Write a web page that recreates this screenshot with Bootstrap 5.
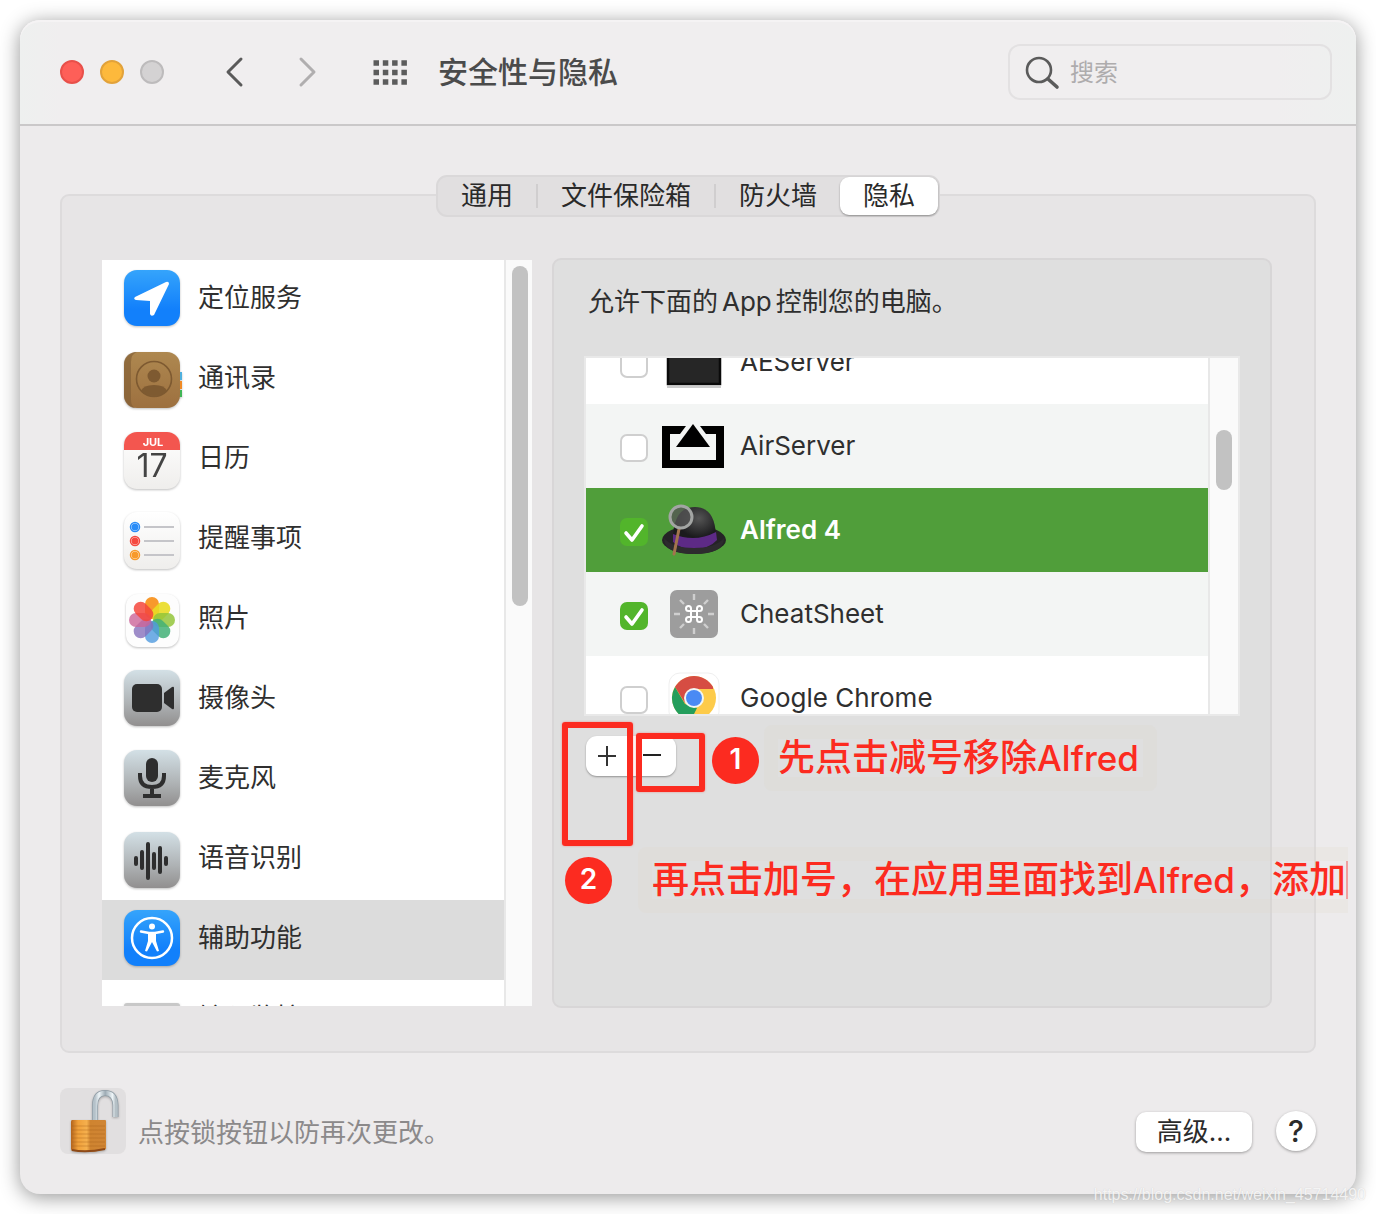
<!DOCTYPE html>
<html lang="zh-CN">
<head>
<meta charset="utf-8">
<meta name="viewport" content="width=device-width, initial-scale=1">
<title>安全性与隐私</title>
<link href="https://cdn.jsdelivr.net/npm/bootstrap@5.3.0/dist/css/bootstrap.min.css" rel="stylesheet">
<script src="https://cdn.jsdelivr.net/npm/bootstrap@5.3.0/dist/js/bootstrap.bundle.min.js" defer></script>
<style>
  body { background: #fff; color: #2f2f2f; font-family: Inter, "Noto Sans CJK SC", sans-serif; font-size: 26px; line-height: 40px; overflow-x: hidden; }
  svg { display: block; flex: none; overflow: visible; }
  .page { padding: 20px; }
  .win { background: #edebec; border-radius: 20px; box-shadow: 0 3px 20px rgba(0,0,0,.42); }
  .titlebar { height: 106px; padding: 0 24px 0 40px; background: linear-gradient(90deg, #eef0ef 0, #f0eeef 40px, #f0eeef calc(100% - 80px), #eef0ef 100%); border-bottom: 2px solid #cac8c9; border-radius: 20px 20px 0 0; box-shadow: inset 0 2px #f5f3f4; }
  .light { width: 24px; height: 24px; border-radius: 50%; border: 2px solid; padding: 0; }
  .light-close { background: #fe5f58; border-color: #e8504a; }
  .light-min { background: #fdb93c; border-color: #e2a23a; }
  .light-off { background: #d4d2d3; border-color: #bdbbbc; }
  .bare { background: none; border: 0; padding: 0; }
  .heading { font-size: 30px; font-weight: 500; color: #4b4b4b; margin-left: 30px; }
  .search { width: 324px; height: 56px; border: 2px solid #e3e1e2; border-radius: 12px; padding: 2px 16px 0; gap: 10px; }
  .search input { font-size: 24px; line-height: 40px; min-width: 0; outline: 0; color: #333; }
  .search input::placeholder { color: #aeacad; opacity: 1; }
  .content { padding: 49px 40px 40px; }
  .tabs { position: relative; z-index: 1; height: 42px; border: 2px solid #dad8d9; border-radius: 11px; background: #e1dfe0; }
  .tabs button { padding: 0 23px; height: 38px; line-height: 36px; color: #2a2a2a; }
  .tabs i { width: 2px; height: 24px; background: #d0cecf; }
  .tabs .on { background: #fff; border-radius: 9px; box-shadow: 0 1px 2px rgba(0,0,0,.35); }
  .panel { margin-top: -23px; padding: 62px 42px 43px 40px; gap: 20px; background: #e7e5e6; border: 2px solid #dddbdc; border-radius: 9px; }
  .side { width: 430px; height: 746px; margin: 2px 0; background: #fff; overflow: hidden; flex: none; }
  .side a { height: 80px; padding: 0 0 4px 22px; gap: 18px; color: #2f2f2f; text-decoration: none; }
  .side a.on { background: #dcdcdc; }
  .side svg, .lockbtn svg { filter: drop-shadow(0 1px 1px rgba(0,0,0,.25)); }
  .track { width: 30px; flex: none; background: #fafafa; border-left: 2px solid #e8e8e8; padding: 6px; }
  .side .track { width: 28px; }
  .thumb { width: 16px; border-radius: 8px; background: #c2c2c2; }
  .thumb-side { height: 340px; }
  .track-apps { padding-top: 72px; }
  .thumb-apps { height: 60px; }
  .group-box { position: relative; background: #dfdfdf; border: 2px solid #d8d6d7; border-radius: 9px; padding: 22px 30px; min-width: 0; }
  .group-box p { margin: 0 0 34px 4px; white-space: nowrap; }
  .apps { height: 360px; border: 2px solid #e9e9e9; background: #fff; overflow: hidden; }
  .apps ul { margin: -38px 0 0; }
  .apps label { height: 84px; padding-left: 34px; gap: 14px; }
  .apps li:nth-child(even) { background: #f3f5f4; }
  .apps li.on { background: #509e3a; color: #fff; font-weight: 600; }
  .apps .form-check-input { width: 28px; height: 28px; margin: 4px 0 0; border: 2px solid #cfcfcf; border-radius: 7px; background-color: #fff; flex: none; }
  .apps .form-check-input:checked { border: 0; background: #52b52b url("data:image/svg+xml,%3Csvg xmlns='http://www.w3.org/2000/svg' viewBox='0 0 28 28'%3E%3Cpath d='M6 15l6 7L22 8' fill='none' stroke='%23fff' stroke-width='3.6' stroke-linecap='round' stroke-linejoin='round'/%3E%3C/svg%3E") center/28px no-repeat; }
  .icon-slot { width: 64px; flex: none; }
  .pm { margin: 20px 0 0 2px; width: 90px; height: 40px; background: #fff; border-radius: 11px; box-shadow: 0 1px 2px rgba(0,0,0,.35); }
  .pm button { padding: 0 14px 0 12px; }
  .note-frame { position: absolute; border: 6px solid #fc2b20; border-radius: 3px; box-shadow: 0 0 2px rgba(252,43,32,.5); pointer-events: none; }
  .frame-plus { left: 8px; top: 462px; width: 71px; height: 124px; }
  .frame-minus { left: 82px; top: 473px; width: 69px; height: 59px; }
  .dot { position: absolute; width: 47px; height: 47px; border-radius: 50%; background: #fc2b20; color: #fff; font-size: 28px; font-weight: 600; line-height: 44px; text-align: center; }
  .dot-1 { left: 158px; top: 477px; }
  .dot-2 { left: 11px; top: 597px; }
  .note { position: absolute; border: 14px solid rgba(222,214,200,.2); border-radius: 8px; color: #fc2b20; font-size: 37px; line-height: 38px; font-weight: 500; white-space: nowrap; }
  .note span { font-size: 35px; }
  .note-1 { left: 210px; top: 465px; padding: 0 4px 0 0; }
  .note-2 { left: 84px; top: 587px; border-right: 0; border-radius: 8px 0 0 8px; }
  .note-2 b { display: inline-block; width: 2px; height: 38px; background: #f0a0a0; vertical-align: top; }
  .foot { margin-top: 35px; gap: 12px; }
  .lockbtn { width: 66px; height: 66px; background: #e1dfe0; border-radius: 8px; }
  .foot p { color: #8b898a; line-height: 42px; }
  .push { height: 40px; margin-bottom: 2px; background: #fff; line-height: 38px; color: #2b2b2b; box-shadow: 0 1px 3px rgba(0,0,0,.35); }
  .push-adv { width: 116px; border-radius: 10px; margin-right: 12px; }
  .push-help { width: 40px; border-radius: 50%; font-size: 30px; font-weight: 500; margin-bottom: 3px; }
  .watermark { position: absolute; right: 10px; top: 1186px; font: 16px/18px "Liberation Sans", sans-serif; color: rgba(255,255,255,.8); text-shadow: 0 0 1px rgba(150,150,150,.4); }
</style>
</head>
<body class="position-relative">
<svg width="0" height="0" class="position-absolute" aria-hidden="true">
  <defs>
    <linearGradient id="blue" x2="0" y2="1"><stop stop-color="#35a4fb"/><stop offset=".7" stop-color="#1280fb"/></linearGradient>
    <linearGradient id="steel" x2="0" y2="1"><stop stop-color="#d3e0e6"/><stop offset=".6" stop-color="#aeb2b4"/><stop offset="1" stop-color="#918f8f"/></linearGradient>
    <linearGradient id="paper" x2="0" y2="1"><stop stop-color="#fff"/><stop offset="1" stop-color="#efeeec"/></linearGradient>
    <linearGradient id="leather" x2="0" y2="1"><stop stop-color="#ae8850"/><stop offset="1" stop-color="#9d703f"/></linearGradient>
    <linearGradient id="brass"><stop stop-color="#b3641d"/><stop offset=".2" stop-color="#f0a03a"/><stop offset=".45" stop-color="#f5b04e"/><stop offset=".55" stop-color="#cf8430"/><stop offset="1" stop-color="#d08534"/></linearGradient>
    <linearGradient id="chrome"><stop stop-color="#b4c1c9"/><stop offset=".2" stop-color="#eef5f8"/><stop offset=".5" stop-color="#9dabb4"/><stop offset=".85" stop-color="#eef5f8"/><stop offset="1" stop-color="#b5c0c6"/></linearGradient>
    <radialGradient id="felt" cx=".6" cy=".3"><stop stop-color="#555"/><stop offset="1" stop-color="#1b1b1d"/></radialGradient>
  </defs>
</svg>
<div class="page">
<main class="win">
  <header class="titlebar d-flex align-items-center">
    <div class="d-flex gap-3">
      <button class="light light-close" aria-label="关闭"></button>
      <button class="light light-min" aria-label="最小化"></button>
      <button class="light light-off" aria-label="缩放" disabled></button>
    </div>
    <div class="d-flex align-items-center ms-5 ps-2">
      <button class="bare ms-1" aria-label="后退"><svg width="20" height="32" fill="none" stroke="#5a5a5a" stroke-width="3" stroke-linecap="round" stroke-linejoin="round"><path d="M17 3L4 16l13 13"/></svg></button>
      <button class="bare ms-5 ps-1" aria-label="前进"><svg width="24" height="32" fill="none" stroke="#b0aeaf" stroke-width="3" stroke-linecap="round" stroke-linejoin="round"><path d="M5 3l13 13L5 29"/></svg></button>
      <button class="bare ms-5 ps-1" aria-label="显示全部"><svg width="36" height="26" viewBox="0 0 36 26" stroke="#5c5c5c" stroke-width="5.500" stroke-dasharray="5.500 3.800"><path d="M1.500 4H36M1.500 13.500H36M1.500 23H36"/></svg></button>
    </div>
    <h1 class="heading mb-0">安全性与隐私</h1>
    <label class="search d-flex align-items-center ms-auto">
      <svg width="34" height="34" fill="none" stroke="#5b5b5b" stroke-width="2.600" stroke-linecap="round"><circle cx="13" cy="14" r="12"/><path d="M22 23l9 8" stroke-width="3.600"/></svg>
      <input class="bare flex-grow-1" type="search" placeholder="搜索" aria-label="搜索">
    </label>
  </header>

  <div class="content">
    <div class="d-flex justify-content-center">
      <div class="tabs d-flex align-items-center" role="tablist">
        <button class="border-0 bg-transparent" role="tab">通用</button><i></i>
        <button class="border-0 bg-transparent" role="tab">文件保险箱</button><i></i>
        <button class="border-0 bg-transparent" role="tab">防火墙</button>
        <button class="border-0 on" role="tab" aria-selected="true">隐私</button>
      </div>
    </div>

    <section class="panel d-flex">
      <div class="side d-flex">
        <nav class="flex-grow-1">
          <a href="#" class="d-flex align-items-center"><svg width="56" height="56"><rect width="56" height="56" rx="13" fill="url(#blue)"/><path d="M42 12L11 27q-2 2 1 3l14 1v13q1 3 4 1L45 14q0-3-3-2z" fill="#fff"/></svg><span>定位服务</span></a>
          <a href="#" class="d-flex align-items-center"><svg width="56" height="56"><path d="M52 22h6v8h-6z" fill="#4fb0de"/><path d="M52 31h6v8h-6z" fill="#f08a24"/><path d="M52 40h6v7h-6z" fill="#3fb555"/><rect y="2" width="56" height="56" rx="13" fill="url(#leather)"/><path d="M13 2h-2A12 12 0 0 0 0 14v32a12 12 0 0 0 11 12Q7 56 7 50V12q0-8 6-10z" fill="#7f5c33" opacity=".6"/><circle cx="30" cy="29" r="17.500" fill="none" stroke="#7e5a31" stroke-width="1.600"/><g fill="#7e5a31"><circle cx="30" cy="26" r="6.500"/><path d="M17 41q2-6 13-6t13 6q-5 5-13 5t-13-5z"/></g></svg><span>通讯录</span></a>
          <a href="#" class="d-flex align-items-center"><svg width="56" height="56"><rect y="2" width="56" height="57" rx="13" fill="url(#paper)"/><path d="M0 20v-5A13 13 0 0 1 13 2h30a13 13 0 0 1 13 13v5z" fill="#f3564f"/><text x="29" y="16" font-size="11" font-weight="700" fill="#fff" text-anchor="middle">JUL</text><text x="28" y="47" font-size="32" font-weight="400" fill="#444" text-anchor="middle">17</text></svg><span>日历</span></a>
          <a href="#" class="d-flex align-items-center"><svg width="56" height="56"><rect y="2" width="56" height="57" rx="13" fill="url(#paper)"/><path d="M20 17h30M20 31h30M20 45h30" stroke="#c5c5c9" stroke-width="2"/><g fill="#fff" stroke-width="1.500"><circle cx="11" cy="17" r="4.500" stroke="#2a8cf7"/><circle cx="11" cy="31" r="4.500" stroke="#f5483f"/><circle cx="11" cy="45" r="4.500" stroke="#f79a2a"/></g><circle cx="11" cy="17" r="3.500" fill="#2a8cf7"/><circle cx="11" cy="31" r="3.500" fill="#f5483f"/><circle cx="11" cy="45" r="3.500" fill="#f79a2a"/></svg><span>提醒事项</span></a>
          <a href="#" class="d-flex align-items-center"><svg width="56" height="56"><rect x="2" y="4" width="53" height="53" rx="12" fill="#fdfdfd"/><g transform="translate(28 30)"><rect x="-7" y="-23" width="14" height="22" rx="7" fill="#f8992c"/><rect x="-7" y="-23" width="14" height="22" rx="7" fill="#e9dc25" transform="rotate(45)" opacity=".9"/><rect x="-7" y="-23" width="14" height="22" rx="7" fill="#94c53b" transform="rotate(90)" opacity=".85"/><rect x="-7" y="-23" width="14" height="22" rx="7" fill="#43b077" transform="rotate(135)" opacity=".85"/><rect x="-7" y="-23" width="14" height="22" rx="7" fill="#4f9ade" transform="rotate(180)" opacity=".8"/><rect x="-7" y="-23" width="14" height="22" rx="7" fill="#8670bb" transform="rotate(225)" opacity=".8"/><rect x="-7" y="-23" width="14" height="22" rx="7" fill="#cc6499" transform="rotate(270)" opacity=".8"/><rect x="-7" y="-23" width="14" height="22" rx="7" fill="#f4473c" transform="rotate(315)" opacity=".85"/></g></svg><span>照片</span></a>
          <a href="#" class="d-flex align-items-center"><svg width="56" height="56"><rect width="56" height="56" rx="13" fill="url(#steel)"/><rect x="8" y="14" width="30" height="28" rx="5" fill="#2e2e2e"/><path d="M40 23l8-6q2-1 2 1v20q0 2-2 1l-8-6z" fill="#2e2e2e"/></svg><span>摄像头</span></a>
          <a href="#" class="d-flex align-items-center"><svg width="56" height="56"><rect width="56" height="56" rx="13" fill="url(#steel)"/><rect x="22" y="8" width="12" height="24" rx="6" fill="#2e2e2e"/><path d="M16 23v3q0 11 12 11t12-11v-3M28 37v9M19 46h18" fill="none" stroke="#2e2e2e" stroke-width="4"/></svg><span>麦克风</span></a>
          <a href="#" class="d-flex align-items-center"><svg width="56" height="56"><rect y="2" width="56" height="56" rx="13" fill="url(#steel)"/><path d="M12 28v6M18 22v16M24 14v34M30 24v14M36 18v24M42 28v6" stroke="#2e2e2e" stroke-width="4" stroke-linecap="round"/></svg><span>语音识别</span></a>
          <a href="#" class="d-flex align-items-center on" aria-current="page"><svg width="56" height="56"><rect width="56" height="56" rx="13" fill="url(#blue)"/><circle cx="28" cy="28" r="20" fill="none" stroke="#fff" stroke-width="2.500"/><circle cx="28" cy="16.500" r="3" fill="#fff"/><path d="M17 21.500l8 1.500h6l8-1.500" fill="none" stroke="#fff" stroke-width="2.400" stroke-linecap="round"/><path d="M24 22h8v9l3 10-2 .5-5-9.500-5 9.500-2-.5 3-10z" fill="#fff"/></svg><span>辅助功能</span></a>
          <a href="#" class="d-flex align-items-center"><svg width="56" height="56"><rect y="13" width="56" height="43" rx="3" fill="#c8c8c8"/></svg><span>输入监控</span></a>
        </nav>
        <div class="track"><div class="thumb thumb-side"></div></div>
      </div>

      <div class="group-box flex-grow-1">
        <p>允许下面的<span class="mx-1">App</span>控制您的电脑。</p>
        <div class="apps d-flex">
          <ul class="list-unstyled flex-grow-1">
            <li><label class="d-flex align-items-center"><input class="form-check-input" type="checkbox"><svg class="icon-slot" width="64" height="64"><path d="M6 8h52v46H6z" fill="#262626" stroke="#0a0a0a" stroke-width="2.500"/><path d="M5 57h54" stroke="#000" stroke-opacity=".2" stroke-width="2"/></svg><span>AEServer</span></label></li>
            <li><label class="d-flex align-items-center"><input class="form-check-input" type="checkbox"><svg class="icon-slot" width="64" height="64"><path d="M0 12h62v42H0z"/><path d="M8 20h46v26H8z" fill="#f3f5f4"/><path d="M18 20l6-8h14l6 8v6H18z" fill="#f3f5f4"/><path d="M31 10l17 23H14z"/></svg><span>AirServer</span></label></li>
            <li class="on"><label class="d-flex align-items-center"><input class="form-check-input" type="checkbox" checked><svg class="icon-slot" width="64" height="64"><ellipse cx="32" cy="42" rx="32" ry="14" fill="#252326"/><path d="M11 45q-1-36 22-36 20 0 21 29 0 9-21 9-14 0-22-2z" fill="url(#felt)"/><path d="M11 36q22 9 43-2l1 8q-8 9-23 9-14 0-21-7z" fill="#5d2a86"/><path d="M2 40q8 10 30 10t30-10q0 16-30 16T2 40z" fill="#2d2b2e"/><path d="M17 31l-5 25" stroke="#a3744e" stroke-width="3" stroke-linecap="round"/><circle cx="19" cy="19" r="11" fill="#555" fill-opacity=".8" stroke="#a3a5a3" stroke-width="3"/></svg><span>Alfred 4</span></label></li>
            <li><label class="d-flex align-items-center"><input class="form-check-input" type="checkbox" checked><svg class="icon-slot" width="64" height="64"><rect x="8" y="8" width="48" height="48" rx="7" fill="#9d9d9d"/><path d="M32 12v6M32 46v6M12 32h6M46 32h6M18 18l4 4M42 42l4 4M46 18l-4 4M22 42l-4 4" stroke="#cfcfcf" stroke-width="2.400"/><path d="M29 29v-2.500a2.500 2.500 0 1 0-2.500 2.500h11a2.500 2.500 0 1 0-2.500-2.500v11a2.500 2.500 0 1 0 2.500-2.500h-11a2.500 2.500 0 1 0 2.500 2.500z" fill="none" stroke="#fff" stroke-width="2"/></svg><span>CheatSheet</span></label></li>
            <li><label class="d-flex align-items-center"><input class="form-check-input" type="checkbox"><svg class="icon-slot" width="64" height="64"><rect x="7" y="7" width="50" height="50" rx="11" fill="#fff" stroke="#efefef"/><circle cx="32" cy="32" r="22" fill="#fdcb4a"/><path d="M13 21a22 22 0 0 1 38 0v2H32l-9 14z" fill="#d64d43"/><path d="M13 21l10 17 12 4-6 12A22 22 0 0 1 13 21z" fill="#249e5c"/><circle cx="32" cy="32" r="10" fill="#f2f6f4"/><circle cx="32" cy="32" r="8" fill="#4a8af4"/></svg><span>Google Chrome</span></label></li>
          </ul>
          <div class="track track-apps"><div class="thumb thumb-apps"></div></div>
        </div>
        <div class="pm d-flex">
          <button class="bare flex-fill" aria-label="添加"><svg width="18" height="20" stroke="#333" stroke-width="2"><path d="M0 10h18M9 0v20"/></svg></button>
          <button class="bare flex-fill" aria-label="移除"><svg width="18" height="20" stroke="#222" stroke-width="2"><path d="M0 9h18"/></svg></button>
        </div>

        <div class="note-frame frame-plus"></div>
        <div class="note-frame frame-minus"></div>
        <div class="dot dot-1">1</div>
        <div class="note note-1">先点击减号移除<span>Alfred</span></div>
        <div class="dot dot-2">2</div>
        <div class="note note-2">再点击加号，在应用里面找到<span>Alfred</span>，添加<b></b></div>
      </div>
    </section>

    <footer class="foot d-flex align-items-end">
      <button class="lockbtn border-0 p-0" aria-label="锁"><svg width="66" height="66"><path d="M35 32V18Q35 5 45 5t10.500 12v12" fill="none" stroke="#8f9ca5" stroke-width="6"/><path d="M35 32V18Q35 5 45 5t10.500 12v12" fill="none" stroke="url(#chrome)" stroke-width="4.500"/><path d="M12 32h33q1 0 1 1v28q-10 3-18 3l-15-1q-2 0-2-2V34q0-2 1-2z" fill="url(#brass)"/><path d="M12 38h33M12 42h33M12 46h33M12 50h33M12 54h33M12 58h33" stroke="#a8601c" stroke-opacity=".4" stroke-width="1.200"/><path d="M12 62q14 3 33-1" fill="none" stroke="#8e4a18" stroke-width="2"/></svg></button>
      <p class="mb-0">点按锁按钮以防再次更改。</p>
      <button class="push push-adv border-0 p-0 ms-auto">高级...</button>
      <button class="push push-help border-0 p-0" aria-label="帮助">?</button>
    </footer>
  </div>
</main>
</div>
<div class="watermark">https://blog.csdn.net/weixin_45714490</div>
</body>
</html>
